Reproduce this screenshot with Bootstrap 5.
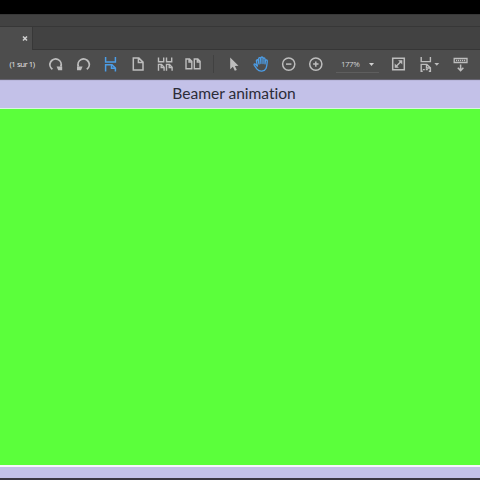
<!DOCTYPE html>
<html lang="fr">
<head>
<meta charset="utf-8">
<meta name="viewport" content="width=device-width, initial-scale=1">
<title>Beamer animation</title>
<link href="https://cdn.jsdelivr.net/npm/bootstrap@5.3.0/dist/css/bootstrap.min.css" rel="stylesheet">
<style>
body{height:480px;font-family:"Open Sans","Noto Sans",sans-serif;background:#000}
.top-black{height:14px;background:#000}
.menu-strip{height:13px;background:#424242;border-top:1px solid #383838;border-bottom:1px solid #373737}
.tab-row{height:23px;background:#4d4d4d}
.doc-tab{width:33px;padding-left:22px;border-right:1px solid #383838;color:#d0d0d0}
.tab-rest{background:#424242;border-bottom:1px solid #363636}
.tools{height:30px;background:#4d4d4d;border-bottom:1px solid #656370;color:#e4e4e4}
.page-no{width:42px;padding-left:9.5px;font-size:7.9px;letter-spacing:-.5px;line-height:28px;white-space:nowrap}
.tool{width:27.4px;height:29px;padding-top:4px;color:#bdbdbd}
.tool svg,.doc-tab svg{fill:none;stroke:currentColor;stroke-width:1.5;display:block}
.tool.on{color:#4c9de6}
.rule{width:14px;height:19px;margin-top:5px}
.rule::before{content:"";display:block;width:1px;height:18px;margin-left:7px;background:#414141}
.zoom-box{width:43px;height:23px;margin-left:6px;padding:0 5px;border-bottom:1px solid #5e5e5e;font-size:8px;letter-spacing:-.5px;color:#d0d0d0}
.zoom-box span{line-height:28px}
.zoom-box svg{margin-top:13px}
.slide-head{height:28px;background:#c3c1e8;border-top:1px solid #b9b7dc;color:#2c2c38}
.slide-head h1{font:400 15.6px/24px Lato,sans-serif;letter-spacing:-.04px;white-space:nowrap;margin-left:-12px}
.slide-body{background:#5bff3b;border-top:1px solid #d9f5df;border-bottom:2px solid #f7f7fc}
.slide-foot{height:13px;background:#c3c1e8;border-bottom:2px solid #3b3742}
</style>
</head>
<body class="d-flex flex-column overflow-hidden m-0">
<div class="top-black flex-shrink-0"></div>
<div class="menu-strip flex-shrink-0"></div>
<div class="tab-row d-flex flex-shrink-0">
  <div class="doc-tab d-flex align-items-center"><svg width="6" height="6" viewBox="0 0 6 6"><path d="M1 .5l4 4M5 .5L1 4.500"/></svg></div>
  <div class="tab-rest flex-grow-1"></div>
</div>
<nav class="tools d-flex flex-shrink-0">
  <span class="page-no flex-shrink-0">(1 sur 1)</span>
  <span class="tool flex-shrink-0 d-flex justify-content-center"><svg width="20" height="20" viewBox="0 0 20 20"><path stroke-width="1.8" d="M6.4 15.2A5.6 5.6 0 1 1 14.8 12.6"/><path d="M10.6 12.6H16.200V16.200H12.200z" fill="currentColor" stroke="none"/></svg></span>
  <span class="tool flex-shrink-0 d-flex justify-content-center"><svg width="20" height="20" viewBox="0 0 20 20"><path stroke-width="1.8" d="M13.800 15.200A5.600 5.600 0 1 0 5.400 12.600"/><path d="M9.600 12.600H4V16.200H8z" fill="currentColor" stroke="none"/></svg></span>
  <span class="tool on flex-shrink-0 d-flex justify-content-center"><svg width="20" height="20" viewBox="0 0 20 20"><path d="M5.600 3V7.900H15.400V3M5.600 17.400V10.700H12L15.400 14V17.400M11.500 10.700V14.200H15.400"/></svg></span>
  <span class="tool flex-shrink-0 d-flex justify-content-center"><svg width="20" height="20" viewBox="0 0 20 20"><path d="M5.3 4.100h5.600l4.100 4v8H5.300zM10.400 4.300v4.300H15"/></svg></span>
  <span class="tool flex-shrink-0 d-flex justify-content-center"><svg width="20" height="20" viewBox="0 0 20 20"><path stroke-width="1.400" d="M3.500 3.500V7.700H8.700V3.500M11.500 3.500V7.700h5.200V3.500M3.500 16.800V10.400H6.500l2.600 2.800v3.600M6.200 10.400v3.200h2.900M11.500 16.800V10.400h3l2.600 2.800v3.600M14.200 10.400v3.200h2.900"/></svg></span>
  <span class="tool flex-shrink-0 d-flex justify-content-center"><svg width="20" height="20" viewBox="0 0 20 20"><path stroke-width="1.400" d="M3 5h3.500l2.300 2.400v7.300H3zM6 5v3h2.800M11.300 5h3.500l2.300 2.400v7.300h-5.800zM14.300 5v3h2.800"/></svg></span>
  <span class="rule flex-shrink-0"></span>
  <span class="tool flex-shrink-0 d-flex justify-content-center"><svg width="20" height="20" viewBox="0 0 20 20"><path d="M6.200 3.400V15.200l2.700-2.400 1.900 4 2-.9-1.900-3.900 3.600-.3z" fill="currentColor" stroke="none"/></svg></span>
  <span class="tool on flex-shrink-0 d-flex justify-content-center"><svg width="20" height="20" viewBox="0 0 20 20"><path stroke-width="1.300" stroke-linejoin="round" stroke-linecap="round" d="M6.400 12.200L4.600 10.200C3.500 9.300 2.600 10.200 3.300 11.300L6 15.200C8.400 18 13.500 17.800 15 14.500C15.900 12.500 16 10 16.300 7C16.300 5.600 14.600 5.600 14.400 7L14 9.800V4.900C14 3.600 12 3.600 12 4.900V9.500V3.900C12 2.700 9.900 2.700 9.900 3.900V9.500L9.600 4.500C9.400 3.300 7.600 3.500 7.700 4.800L8 10L7.100 6.400C6.600 5.300 5.200 5.800 5.400 7z"/></svg></span>
  <span class="tool flex-shrink-0 d-flex justify-content-center"><svg width="20" height="20" viewBox="0 0 20 20"><circle cx="9.700" cy="10.100" r="6.100"/><path d="M7 10.100h5.400"/></svg></span>
  <span class="tool flex-shrink-0 d-flex justify-content-center"><svg width="20" height="20" viewBox="0 0 20 20"><circle cx="9.800" cy="10.100" r="6.100"/><path d="M7.100 10.100h5.400M9.800 7.400v5.400"/></svg></span>
  <span class="zoom-box flex-shrink-0 d-flex justify-content-between"><span>177%</span><svg width="5" height="3" viewBox="0 0 5 3"><path d="M0 0h5L2.500 3z" fill="currentColor"/></svg></span>
  <span class="tool flex-shrink-0 d-flex justify-content-center ms-1"><svg width="20" height="20" viewBox="-1.500 0 20 20"><path d="M4.200 4.200h11.600v11.600H4.200z"/><path d="M7 13l6-6"/><path d="M9.600 6.200h4.200v4.200zM6.200 9.600v4.200h4.200z" fill="currentColor" stroke="none"/></svg></span>
  <span class="tool flex-shrink-0 d-flex justify-content-center"><svg width="20" height="20" viewBox="-2 0 20 20" overflow="visible"><path stroke-width="1.400" d="M5.200 3V7.600H14.400V3M6.700 17.200H5.200V10.400H10.800l3.600 3.400V17.200h-1.600M10.500 10.400v3.600h3.900"/><path d="M6.800 15.700h6" stroke-width="1.200" stroke-dasharray="2 1"/><path d="M18.400 9h4.800l-2.400 2.700z" fill="currentColor" stroke="none"/></svg></span>
  <span class="tool flex-shrink-0 d-flex justify-content-center ms-2"><svg width="20" height="20" viewBox="-2 0 20 20" overflow="visible"><path stroke-width="1.300" d="M3.200 4.500h12.800v4H3.200z"/><path stroke-width="1.400" stroke-dasharray="1.200 .8" d="M5 6.500h9.400"/><path d="M9.600 10.500v5.800M6.800 13.700l2.800 2.900 2.800-2.900"/></svg></span>
</nav>
<header class="slide-head flex-shrink-0 text-center"><h1 class="mb-0">Beamer animation</h1></header>
<main class="slide-body flex-grow-1"></main>
<footer class="slide-foot flex-shrink-0"></footer>
<script src="https://cdn.jsdelivr.net/npm/bootstrap@5.3.0/dist/js/bootstrap.bundle.min.js"></script>
</body>
</html>
